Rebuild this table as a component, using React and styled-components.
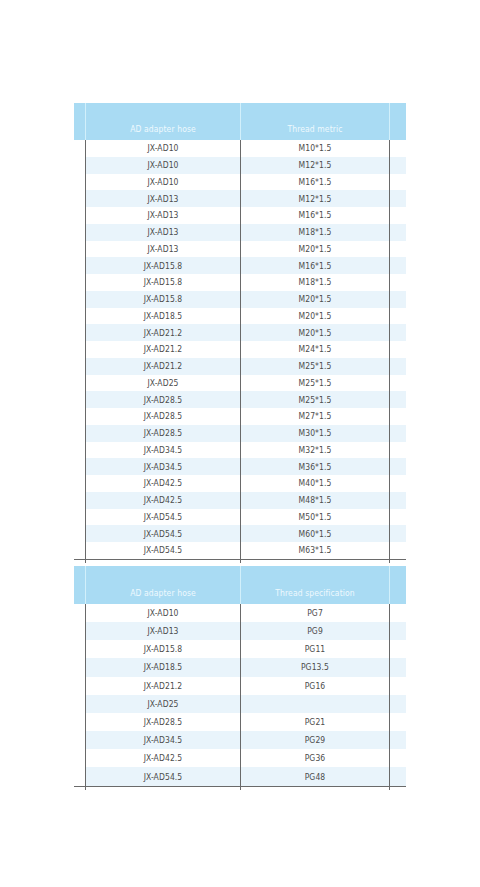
import React from "react";
import styled, { createGlobalStyle } from "styled-components";

const Global = createGlobalStyle`
  html, body { margin: 0; padding: 0; background: #ffffff; }
  body { font-family: "Liberation Sans Narrow", "DejaVu Sans Condensed", Roboto, sans-serif; }
`;

const Page = styled.div`
  width: 480px;
  height: 887px;
  box-sizing: border-box;
  padding: 103px 0 0 74px;
  display: flex;
  flex-direction: column;
`;

const Table = styled.div`
  width: 332px;
  display: flex;
  flex-direction: column;
  margin-bottom: ${(p) => p.$gap || 0}px;
`;

const Row = styled.div`
  display: grid;
  grid-template-columns: 12px 155px 149px 16px;
  height: ${(p) => p.$h}px;
  background: ${(p) => (p.$head ? "#a9dbf3" : "transparent")};
`;

const Gutter = styled.div`
  box-sizing: border-box;
  border-right: ${(p) => (p.$line ? `1px solid ${p.$head ? "#d2f0fb" : "#696969"}` : "none")};
  background: ${(p) => (p.$alt && !p.$left ? "#e9f4fb" : "transparent")};
`;

const Cell = styled.div`
  box-sizing: border-box;
  border-right: 1px solid ${(p) => (p.$head ? "#d2f0fb" : "#696969")};
  background: ${(p) => (p.$alt ? "#e9f4fb" : "transparent")};
  display: flex;
  justify-content: center;
  align-items: ${(p) => (p.$head ? "flex-end" : "center")};
  padding-bottom: ${(p) => (p.$head ? 6 : 0)}px;
  font-size: 8.5px;
  color: ${(p) => (p.$head ? "#eef9fe" : "#4c4c4c")};
  white-space: nowrap;
  letter-spacing: 0.1px;
`;

const Rule = styled.div`
  height: 1px;
  background: #6a6a6a;
`;

const Tail = styled.div`
  display: grid;
  grid-template-columns: 12px 155px 149px 16px;
  height: 3px;
`;

const TailCell = styled.div`
  box-sizing: border-box;
  border-right: ${(p) => (p.$line ? "1px solid #696969" : "none")};
`;

const t1 = [
  ["JX-AD10", "M10*1.5"],
  ["JX-AD10", "M12*1.5"],
  ["JX-AD10", "M16*1.5"],
  ["JX-AD13", "M12*1.5"],
  ["JX-AD13", "M16*1.5"],
  ["JX-AD13", "M18*1.5"],
  ["JX-AD13", "M20*1.5"],
  ["JX-AD15.8", "M16*1.5"],
  ["JX-AD15.8", "M18*1.5"],
  ["JX-AD15.8", "M20*1.5"],
  ["JX-AD18.5", "M20*1.5"],
  ["JX-AD21.2", "M20*1.5"],
  ["JX-AD21.2", "M24*1.5"],
  ["JX-AD21.2", "M25*1.5"],
  ["JX-AD25", "M25*1.5"],
  ["JX-AD28.5", "M25*1.5"],
  ["JX-AD28.5", "M27*1.5"],
  ["JX-AD28.5", "M30*1.5"],
  ["JX-AD34.5", "M32*1.5"],
  ["JX-AD34.5", "M36*1.5"],
  ["JX-AD42.5", "M40*1.5"],
  ["JX-AD42.5", "M48*1.5"],
  ["JX-AD54.5", "M50*1.5"],
  ["JX-AD54.5", "M60*1.5"],
  ["JX-AD54.5", "M63*1.5"],
];

const t2 = [
  ["JX-AD10", "PG7"],
  ["JX-AD13", "PG9"],
  ["JX-AD15.8", "PG11"],
  ["JX-AD18.5", "PG13.5"],
  ["JX-AD21.2", "PG16"],
  ["JX-AD25", ""],
  ["JX-AD28.5", "PG21"],
  ["JX-AD34.5", "PG29"],
  ["JX-AD42.5", "PG36"],
  ["JX-AD54.5", "PG48"],
];

function DataTable({ head, rows, headH, rowH, gap }) {
  return (
    <Table $gap={gap}>
      <Row $head $h={headH}>
        <Gutter $line $head $left />
        <Cell $head>{head[0]}</Cell>
        <Cell $head>{head[1]}</Cell>
        <Gutter $head />
      </Row>
      {rows.map((r, i) => {
        const alt = i % 2 === 1;
        return (
          <Row key={i} $h={rowH}>
            <Gutter $line $left />
            <Cell $alt={alt}>{r[0]}</Cell>
            <Cell $alt={alt}>{r[1]}</Cell>
            <Gutter $alt={alt} />
          </Row>
        );
      })}
      <Rule />
      <Tail>
        <TailCell $line />
        <TailCell $line />
        <TailCell $line />
        <TailCell />
      </Tail>
    </Table>
  );
}

export default function App() {
  return (
    <>
      <Global />
      <Page>
        <DataTable
          head={["AD adapter hose", "Thread metric"]}
          rows={t1}
          headH={37}
          rowH={16.76}
          gap={3}
        />
        <DataTable
          head={["AD adapter hose", "Thread specification"]}
          rows={t2}
          headH={38}
          rowH={18.2}
          gap={0}
        />
      </Page>
    </>
  );
}
